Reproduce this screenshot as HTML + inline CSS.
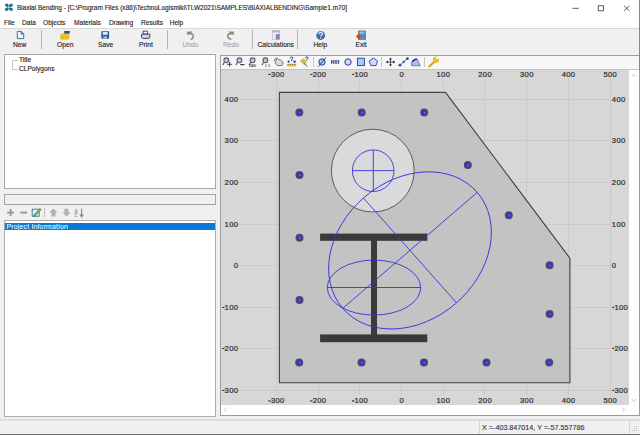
<!DOCTYPE html>
<html><head><meta charset="utf-8">
<style>
*{margin:0;padding:0;box-sizing:border-box}
html,body{width:640px;height:435px;overflow:hidden;background:#f0f0f0;font-family:"Liberation Sans",sans-serif;color:#1a1a1a}
.a{position:absolute;white-space:nowrap}
#title{left:0;top:0;width:640px;height:16px;background:#fff}
#menu{left:0;top:16px;width:640px;height:12px;background:#fff}
.t{font-size:6.6px;line-height:8px;-webkit-text-stroke:0.12px currentColor}
.lbl{font-size:6.7px;line-height:8px;color:#202020;-webkit-text-stroke:0.12px currentColor}
</style></head><body>
<div class="a" id="title"></div>
<div class="a" id="menu"></div>
<div class="a" style="left:0;top:28px;width:640px;height:1px;background:#d9d9d9"></div>
<!-- title text -->
<div class="a t" style="left:17px;top:4px;color:#222;font-size:6.53px">Biaxial Bending - [C:\Program Files (x86)\TechnoLogismiki\TLW2021\SAMPLES\BIAXIALBENDING\Sample1.m70]</div>
<!-- menu -->
<div class="a t" style="left:4px;top:18.5px">File</div>
<div class="a t" style="left:22px;top:18.5px">Data</div>
<div class="a t" style="left:43px;top:18.5px">Objects</div>
<div class="a t" style="left:74px;top:18.5px">Materials</div>
<div class="a t" style="left:109px;top:18.5px">Drawing</div>
<div class="a t" style="left:141px;top:18.5px">Results</div>
<div class="a t" style="left:169.7px;top:18.5px">Help</div>

<!-- left panels -->
<div class="a" style="left:4px;top:54px;width:212px;height:135px;background:#fff;border:1px solid #a8a8a8"></div>
<div class="a" style="left:4px;top:194px;width:212px;height:11px;background:#f0f0f0;border:1px solid #a4a4a4"></div>
<div class="a" style="left:4px;top:220px;width:212px;height:197px;background:#fff;border:1px solid #acacac"></div>
<div class="a" style="left:5px;top:223px;width:210px;height:7px;background:#0a78d6;overflow:hidden"><div class="a t" style="left:1.5px;top:-0.2px;color:#fff;font-size:6.9px;line-height:8px;letter-spacing:0.19px;-webkit-text-stroke:0.05px #fff">Project Information</div></div>

<div class="a t" style="left:19px;top:56px">Title</div>
<div class="a t" style="left:19px;top:65px">CLPolygons</div>

<!-- drawing panel -->
<div class="a" style="left:220px;top:55px;width:420px;height:361px;background:#fff;border:1px solid #9c9c9c"></div>
<svg class="a" style="left:0;top:0" width="640" height="435" viewBox="0 0 640 435">
<rect x="221" y="70" width="408" height="335" fill="#d7d7d7"/>
<g stroke="#cacaca" stroke-width="1"><line x1="276.5" y1="79" x2="276.5" y2="395"/><line x1="318.5" y1="79" x2="318.5" y2="395"/><line x1="359.5" y1="79" x2="359.5" y2="395"/><line x1="401.5" y1="79" x2="401.5" y2="395"/><line x1="443.5" y1="79" x2="443.5" y2="395"/><line x1="484.5" y1="79" x2="484.5" y2="395"/><line x1="526.5" y1="79" x2="526.5" y2="395"/><line x1="568.5" y1="79" x2="568.5" y2="395"/><line x1="610.5" y1="79" x2="610.5" y2="395"/><line x1="238" y1="390.5" x2="611" y2="390.5"/><line x1="238" y1="348.5" x2="611" y2="348.5"/><line x1="238" y1="307.5" x2="611" y2="307.5"/><line x1="238" y1="265.5" x2="611" y2="265.5"/><line x1="238" y1="224.5" x2="611" y2="224.5"/><line x1="238" y1="182.5" x2="611" y2="182.5"/><line x1="238" y1="140.5" x2="611" y2="140.5"/><line x1="238" y1="99.5" x2="611" y2="99.5"/></g>
<g font-family="Liberation Sans" font-size="7.6" fill="#2e2e2e" stroke="#2e2e2e" stroke-width="0.22" letter-spacing="0.35"><rect x="268.67" y="74.00" width="2" height="0.9"/><text x="270.92" y="76.90">300</text><rect x="268.67" y="400.50" width="2" height="0.9"/><text x="270.92" y="403.40">300</text><rect x="310.40" y="74.00" width="2" height="0.9"/><text x="312.65" y="76.90">200</text><rect x="310.40" y="400.50" width="2" height="0.9"/><text x="312.65" y="403.40">200</text><rect x="352.13" y="74.00" width="2" height="0.9"/><text x="354.38" y="76.90">100</text><rect x="352.13" y="400.50" width="2" height="0.9"/><text x="354.38" y="403.40">100</text><text x="399.39" y="76.90">0</text><text x="399.39" y="403.40">0</text><text x="436.54" y="76.90">100</text><text x="436.54" y="403.40">100</text><text x="478.27" y="76.90">200</text><text x="478.27" y="403.40">200</text><text x="520.00" y="76.90">300</text><text x="520.00" y="403.40">300</text><text x="561.73" y="76.90">400</text><text x="561.73" y="403.40">400</text><text x="603.46" y="76.90">500</text><text x="603.46" y="403.40">500</text><rect x="222.32" y="390.00" width="2" height="0.9"/><text x="224.57" y="392.90">300</text><rect x="612.20" y="390.00" width="2" height="0.9"/><text x="614.45" y="392.90">300</text><rect x="222.32" y="348.00" width="2" height="0.9"/><text x="224.57" y="350.90">200</text><rect x="612.20" y="348.00" width="2" height="0.9"/><text x="614.45" y="350.90">200</text><rect x="222.32" y="307.00" width="2" height="0.9"/><text x="224.57" y="309.90">100</text><rect x="612.20" y="307.00" width="2" height="0.9"/><text x="614.45" y="309.90">100</text><text x="233.72" y="267.90">0</text><text x="611.85" y="267.90">0</text><text x="224.57" y="226.90">100</text><text x="611.85" y="226.90">100</text><text x="224.57" y="184.90">200</text><text x="611.85" y="184.90">200</text><text x="224.57" y="142.90">300</text><text x="611.85" y="142.90">300</text><text x="224.57" y="101.90">400</text><text x="611.85" y="101.90">400</text></g>
<polygon points="279.4,92.4 445.5,92.4 569.9,258.2 569.9,382.7 279.4,382.7" fill="#c3c3c3" stroke="#454545" stroke-width="1.15"/>
<circle cx="372.8" cy="170.6" r="41.4" fill="#dadada" stroke="#505050" stroke-width="0.9"/>
<g fill="#3a3a3a"><rect x="320.1" y="233.6" width="107.2" height="7.2"/><rect x="371" y="240" width="6" height="95"/><rect x="320.1" y="334.4" width="107.2" height="7.8"/></g>
<g fill="none" stroke="#3535dd" stroke-width="0.9">
<circle cx="373.2" cy="170.7" r="20.8"/>
<line x1="352.4" y1="170.6" x2="394" y2="170.6"/><line x1="373.3" y1="150" x2="373.3" y2="191.4"/>
<ellipse cx="410" cy="250.4" rx="88.8" ry="70.1" transform="rotate(-40.7 410 250.4)"/>
<line x1="477.3" y1="192.3" x2="342.8" y2="308.3"/>
<line x1="363.5" y1="198.1" x2="456.6" y2="302.9"/>
<ellipse cx="374" cy="287.6" rx="46.7" ry="27.5"/>
<line x1="327.3" y1="287.5" x2="420.7" y2="287.5"/>
</g>
<g fill="#4c4c5c"><circle cx="299.3" cy="112.4" r="4.0"/><circle cx="361.7" cy="112.4" r="4.0"/><circle cx="424.2" cy="112.4" r="4.0"/><circle cx="299.5" cy="175" r="4.0"/><circle cx="467.8" cy="165.1" r="4.0"/><circle cx="508.8" cy="215.2" r="4.0"/><circle cx="299.5" cy="237.8" r="4.0"/><circle cx="549.6" cy="265.2" r="4.0"/><circle cx="299.5" cy="299.9" r="4.0"/><circle cx="549.6" cy="313.9" r="4.0"/><circle cx="299.2" cy="362.5" r="4.0"/><circle cx="361.5" cy="362.5" r="4.0"/><circle cx="424" cy="362.5" r="4.0"/><circle cx="486.5" cy="362.5" r="4.0"/><circle cx="549.2" cy="362.5" r="4.0"/></g>
<g fill="#3636c6"><circle cx="299.3" cy="112.4" r="2.7"/><circle cx="361.7" cy="112.4" r="2.7"/><circle cx="424.2" cy="112.4" r="2.7"/><circle cx="299.5" cy="175" r="2.7"/><circle cx="467.8" cy="165.1" r="2.7"/><circle cx="508.8" cy="215.2" r="2.7"/><circle cx="299.5" cy="237.8" r="2.7"/><circle cx="549.6" cy="265.2" r="2.7"/><circle cx="299.5" cy="299.9" r="2.7"/><circle cx="549.6" cy="313.9" r="2.7"/><circle cx="299.2" cy="362.5" r="2.7"/><circle cx="361.5" cy="362.5" r="2.7"/><circle cx="424" cy="362.5" r="2.7"/><circle cx="486.5" cy="362.5" r="2.7"/><circle cx="549.2" cy="362.5" r="2.7"/></g><g fill="#6a6ae8"><circle cx="299.7" cy="112.60000000000001" r="0.9"/><circle cx="362.09999999999997" cy="112.60000000000001" r="0.9"/><circle cx="424.59999999999997" cy="112.60000000000001" r="0.9"/><circle cx="299.9" cy="175.2" r="0.9"/><circle cx="468.2" cy="165.29999999999998" r="0.9"/><circle cx="509.2" cy="215.39999999999998" r="0.9"/><circle cx="299.9" cy="238.0" r="0.9"/><circle cx="550.0" cy="265.4" r="0.9"/><circle cx="299.9" cy="300.09999999999997" r="0.9"/><circle cx="550.0" cy="314.09999999999997" r="0.9"/><circle cx="299.59999999999997" cy="362.7" r="0.9"/><circle cx="361.9" cy="362.7" r="0.9"/><circle cx="424.4" cy="362.7" r="0.9"/><circle cx="486.9" cy="362.7" r="0.9"/><circle cx="549.6" cy="362.7" r="0.9"/></g>
</svg>
<!-- status bar -->
<div class="a" style="left:0;top:419px;width:640px;height:1px;background:#dadada"></div>
<div class="a t" style="left:482px;top:424px;color:#333;font-size:7.2px">X =-403.847014, Y =-57.557786</div>
<!-- extras -->
<svg class="a" style="left:0;top:0" width="640" height="435" viewBox="0 0 640 435">
<!-- tree lines -->
<g stroke="#c4c4c4" stroke-width="1"><line x1="12.5" y1="60.5" x2="12.5" y2="69.5"/><line x1="12.5" y1="60.5" x2="18" y2="60.5"/><line x1="12.5" y1="69.5" x2="18" y2="69.5"/></g>
<!-- drawing toolbar bottom line -->
<rect x="221" y="56" width="418" height="13" fill="#f7f7f7"/><line x1="221" y1="69.5" x2="639" y2="69.5" stroke="#c4c4c4"/>
<!-- vertical scrollbar -->
<rect x="629" y="70" width="10" height="335" fill="#ffffff"/>
<path d="M631.6,76.6 L633.8,74.4 L636,76.6" fill="none" stroke="#c0c0c0" stroke-width="0.9"/>
<path d="M631.6,399 L633.8,401.2 L636,399" fill="none" stroke="#c0c0c0" stroke-width="0.9"/>
<!-- horizontal scrollbar -->
<path d="M226.6,407.6 L224.4,409.8 L226.6,412" fill="none" stroke="#c0c0c0" stroke-width="0.9"/>
<path d="M622.4,407.6 L624.6,409.8 L622.4,412" fill="none" stroke="#c0c0c0" stroke-width="0.9"/>
<!-- status bar -->
<line x1="0" y1="420.5" x2="639" y2="420.5" stroke="#e2e2e2"/>
<line x1="479.5" y1="421" x2="479.5" y2="434" stroke="#d6d6d6"/>
<line x1="629.5" y1="421" x2="629.5" y2="434" stroke="#d6d6d6"/>
<g fill="#b8b8b8"><rect x="636" y="426" width="1" height="1"/><rect x="634" y="428" width="1" height="1"/><rect x="636" y="428" width="1" height="1"/><rect x="632" y="430" width="1" height="1"/><rect x="634" y="430" width="1" height="1"/><rect x="636" y="430" width="1" height="1"/></g>
<line x1="0" y1="434.5" x2="640" y2="434.5" stroke="#707070"/>
<!-- mini toolbar -->
<g fill="#9a9a9a"><rect x="7.2" y="211.6" width="6.8" height="2" /><rect x="9.6" y="209" width="2" height="7"/><rect x="20.3" y="211.6" width="6.8" height="2"/></g>
<rect x="32.2" y="209.2" width="7" height="7" fill="#e8f0fa" stroke="#3a6aaa" stroke-width="0.9"/>
<path d="M33.8,215 L39.8,208.4 L41.2,209.6 L35.2,216.2Z" fill="#5ac83a" stroke="#2a7a2a" stroke-width="0.5"/>
<path d="M33.6,215.2 L35.2,216.2 L33.2,216.6Z" fill="#333"/>
<line x1="44.5" y1="208" x2="44.5" y2="217" stroke="#c0c0c0"/>
<path d="M53.4,208.6 L57.6,212.6 H55.4 V216.4 H51.4 V212.6 H49.2Z" fill="#b0b0b0"/>
<path d="M66.6,216.6 L70.6,212.6 H68.4 V208.8 H64.4 V212.6 H62.4Z" fill="#b0b0b0"/>
<text x="74.6" y="212.6" font-family="Liberation Sans" font-size="4.6" fill="#8a8a8a" font-weight="bold">A</text>
<text x="74.6" y="217.2" font-family="Liberation Sans" font-size="4.6" fill="#8a8a8a" font-weight="bold">Z</text>
<path d="M81.6,208.6 V216.6 M79.8,214.4 L81.6,216.8 L83.4,214.4" fill="none" stroke="#8a8a8a" stroke-width="1.2"/>
</svg>
<!-- main toolbar -->
<div class="a lbl" style="left:13px;top:41px">New</div>
<div class="a lbl" style="left:57px;top:41px">Open</div>
<div class="a lbl" style="left:98px;top:41px">Save</div>
<div class="a lbl" style="left:139px;top:41px">Print</div>
<div class="a lbl" style="left:182.5px;top:41px;color:#a8a8a8">Undo</div>
<div class="a lbl" style="left:223px;top:41px;color:#a8a8a8">Redo</div>
<div class="a lbl" style="left:257.5px;top:41px">Calculations</div>
<div class="a lbl" style="left:313.5px;top:41px">Help</div>
<div class="a lbl" style="left:355.5px;top:41px">Exit</div>
<svg class="a" style="left:0;top:0" width="640" height="70" viewBox="0 0 640 70">
<g stroke="#b4b4b4" stroke-width="1"><line x1="41.5" y1="30" x2="41.5" y2="49"/><line x1="167.5" y1="30" x2="167.5" y2="49"/><line x1="252.5" y1="30" x2="252.5" y2="49"/><line x1="297.5" y1="30" x2="297.5" y2="49"/></g>
<!-- app icon -->
<g fill="#1f6f8f"><path d="M5.2,3.8 L8,3.8 L8.9,6.3 L7.9,7.3 L5.2,6.3Z"/><path d="M12.6,3.8 L9.8,3.8 L8.9,6.3 L9.9,7.3 L12.6,6.3Z"/><path d="M5.2,10.8 L8,10.8 L8.9,8.3 L7.9,7.3 L5.2,8.3Z"/><path d="M12.6,10.8 L9.8,10.8 L8.9,8.3 L9.9,7.3 L12.6,8.3Z"/></g>
<!-- window controls -->
<line x1="572.5" y1="8.3" x2="578.8" y2="8.3" stroke="#333" stroke-width="0.8"/>
<rect x="598.2" y="5.8" width="5.3" height="5" fill="none" stroke="#333" stroke-width="0.8"/>
<path d="M624.2,5.8 L629.4,10.8 M629.4,5.8 L624.2,10.8" stroke="#333" stroke-width="0.8"/>
<line x1="639.5" y1="0" x2="639.5" y2="435" stroke="#888" stroke-width="1"/>
<!-- New -->
<path d="M17.3,31.4 H21.3 L23.7,33.8 V38.6 H17.3Z" fill="#eaf4fc" stroke="#3f5f80" stroke-width="0.9"/>
<path d="M21.1,31.6 V34 H23.5" fill="#7a9ab8" stroke="#3f5f80" stroke-width="0.8"/>
<!-- Open -->
<path d="M60.6,33.4 H63.4 L64.2,32.6 H68.6 V39.3 H60.6Z" fill="#f0cc38"/>
<path d="M60.4,35.2 L61.8,34.4 H69.6 L68.8,39.4 H60.4Z" fill="#ecbc1e"/>
<path d="M64.2,31 H69.8 V33.6 H64.2Z" fill="#3a4c7c"/>
<!-- Save -->
<rect x="101.3" y="31.2" width="7.8" height="7.5" rx="0.6" fill="#2a5a9a"/>
<rect x="102.8" y="32" width="4.8" height="2.8" fill="#d8ecff"/>
<rect x="103.3" y="36.4" width="3.8" height="2.3" fill="#8fc0f0"/>
<!-- Print -->
<path d="M143,31.2 H147.6 V34 H143Z" fill="#f4f6fa" stroke="#404860" stroke-width="0.9"/>
<path d="M141.6,34.2 H149.8 V37.6 L148.6,38.4 H142.6 L141.6,37.6Z" fill="#c8cde0" stroke="#404860" stroke-width="1"/>
<path d="M143.5,37 L147,35.5" stroke="#f0f0ff" stroke-width="0.8"/>
<!-- Undo -->
<path d="M187.3,32.4 L190.8,32.4 L189.8,33.6 Q193.3,33.4 193.3,36 Q193.3,38.4 190.8,39.6" fill="none" stroke="#8a8a8a" stroke-width="1.6"/>
<path d="M187.2,32.2 L190.6,32.2 L187.2,35.6Z" fill="#8a8a8a"/>
<!-- Redo -->
<path d="M233.7,32.4 L230.2,32.4 L231.2,33.6 Q227.7,33.4 227.7,36 Q227.7,38.4 231.2,39.6" fill="none" stroke="#8a8a8a" stroke-width="1.6"/>
<path d="M233.8,32.2 L230.4,32.2 L233.8,35.6Z" fill="#8a8a8a"/>
<!-- Calculations -->
<rect x="272.4" y="30.8" width="7.4" height="8.8" fill="#f0ecf8" stroke="#a89cc8" stroke-width="0.5"/>
<rect x="272.4" y="30.8" width="7.4" height="1.6" fill="#b4a6d6"/>
<rect x="275.8" y="34.2" width="3.8" height="5.2" fill="#8a7cb4"/>
<!-- Help -->
<circle cx="320.7" cy="35.5" r="4.4" fill="#3f67a8"/>
<path d="M317.4,33.6 Q318.6,31.4 321.6,31.6" fill="none" stroke="#8ab0e0" stroke-width="0.8"/>
<path d="M319,34.2 Q319,32.6 320.8,32.6 Q322.6,32.6 322.6,34.1 Q322.6,35.2 320.8,35.8 V36.6" fill="none" stroke="#f0f6ff" stroke-width="1.1"/>
<circle cx="320.8" cy="38" r="0.7" fill="#f0f6ff"/>
<!-- Exit -->
<rect x="358.2" y="30.6" width="7.6" height="9.2" fill="#5e6e6a"/>
<rect x="359.4" y="31.6" width="5.2" height="7.6" fill="#4a94cc"/>
<path d="M359.4,31.6 H364.6 V33 L359.4,34.6Z" fill="#8ac0e8"/>
<path d="M356,36.4 L358.8,33.4 L361.8,36.4 L358.8,39.4Z" fill="#d8401e"/>
<!-- drawing toolbar -->
<g stroke="#c8c8c8"><line x1="313.5" y1="57" x2="313.5" y2="67"/><line x1="381.5" y1="57" x2="381.5" y2="67"/><line x1="424.5" y1="57" x2="424.5" y2="67"/></g>
<g fill="#c4c4dc" stroke="#5a5a6c" stroke-width="1.1">
<circle cx="226.3" cy="60.3" r="2.4"/><circle cx="239.4" cy="60.3" r="2.4"/><circle cx="252.6" cy="60.3" r="2.4"/><circle cx="265.4" cy="60.3" r="2.4"/>
</g>
<g stroke="#2c2c3c" stroke-width="1" fill="none">
<path d="M224.2,62.4 L223,65"/><path d="M237.3,62.4 L236.1,65"/><path d="M250.5,62.4 L249.3,65"/><path d="M263.3,62.4 L262.1,65"/>
<path d="M227.2,64.3 H232 M229.6,61.8 V66.6" stroke-width="0.9"/>
<path d="M240.2,64.6 H244.6" stroke-width="1.1"/>
</g>
<text x="248.4" y="67" font-family="Liberation Sans" font-size="4.4" font-weight="bold" fill="#303030">100</text>
<text x="264.8" y="67.2" font-family="Liberation Sans" font-size="4.2" fill="#303030">1:1</text>
<!-- hand -->
<path d="M275,61.6 L274.3,60.2 Q274.2,59 275.4,59.4 L276.6,60.4 L275.8,58.6 Q275.8,57.6 277,58 L278.6,59.6 L280.2,59.8 L282.6,61.8 Q283.4,63.8 282,65.4 L277.6,65.8 Q276,64.8 275,61.6Z" fill="#dcdce8" stroke="#6a6a78" stroke-width="0.9"/>
<!-- grid/ruler -->
<rect x="287" y="63.6" width="9.2" height="3" fill="#e6cc3a"/>
<g fill="#5a5020"><rect x="287.8" y="64.2" width="1" height="0.9"/><rect x="290" y="64.2" width="1" height="0.9"/><rect x="292.2" y="64.2" width="1" height="0.9"/><rect x="294.4" y="64.2" width="1" height="0.9"/></g>
<circle cx="288.6" cy="61.6" r="1.1" fill="#2a3f8a"/><circle cx="294.6" cy="61.6" r="1.2" fill="#2a3f8a"/>
<path d="M290.4,58.4 Q290.4,57 291.6,57 Q292.8,57 292.8,58.2 Q292.8,59 291.6,59.6 V61" fill="none" stroke="#2a3f8a" stroke-width="1"/>
<!-- pin -->
<path d="M300.6,61 L303.4,58.8 L306.4,62 L304.2,64.6 Z" fill="#e4c030" stroke="#8a7a30" stroke-width="0.5"/>
<path d="M304.6,63.6 L307.2,66.4" stroke="#505050" stroke-width="1"/>
<path d="M305.6,58.2 Q305.6,56.8 306.8,56.8 Q308,56.8 308,58 Q308,58.8 306.8,59.4 V60.4" fill="none" stroke="#2a3f8a" stroke-width="1"/>
<!-- phi -->
<circle cx="322" cy="62" r="3.2" fill="#a8c8f0" stroke="#2a3a9a" stroke-width="1"/>
<path d="M318.2,66.6 L326,57.4" stroke="#2a3a9a" stroke-width="1"/>
<!-- IPE -->
<g fill="#4a5690"><rect x="331" y="60" width="1.3" height="3.8"/><rect x="333.2" y="60" width="1.3" height="3.8"/><rect x="332" y="61.4" width="1.6" height="1"/><rect x="335.2" y="60" width="1.4" height="3.8"/><rect x="336.4" y="60" width="1" height="0.9"/><rect x="336.4" y="61.5" width="0.8" height="0.8"/><rect x="336.4" y="62.9" width="1" height="0.9"/><path d="M337.8,60 H338.6 Q339.4,60 339.4,61.9 Q339.4,63.8 338.6,63.8 H337.8Z"/></g>
<!-- circle -->
<circle cx="348" cy="62" r="3.2" fill="#c8dcf8" stroke="#2a3a9a" stroke-width="1"/>
<!-- square -->
<rect x="357.4" y="58.2" width="7" height="7.4" fill="#a8cbf5" stroke="#2a3a9a" stroke-width="0.9"/>
<!-- pentagon -->
<path d="M373.4,58 L377.6,61 L376,65.6 L370.8,65.6 L369.2,61Z" fill="#c8dcf8" stroke="#2a3a9a" stroke-width="0.9"/>
<!-- move -->
<g stroke="#303050" stroke-width="0.8" fill="#303050"><path d="M390.5,58 V66 M386.4,62 H394.6"/><path d="M388.9,59.6 L390.5,57.4 L392.1,59.6Z M388.9,64.4 L390.5,66.6 L392.1,64.4Z M388,60.4 L385.8,62 L388,63.6Z M393,60.4 L395.2,62 L393,63.6Z" stroke="none"/></g>
<!-- measure -->
<path d="M400,65.2 L407.4,58.6" stroke="#3a4a9a" stroke-width="0.9"/>
<circle cx="400" cy="65.2" r="1.4" fill="#3a4a9a"/><circle cx="403.7" cy="61.9" r="1.1" fill="#3a4a9a"/><circle cx="407.4" cy="58.6" r="1.4" fill="#3a4a9a"/>
<!-- angle -->
<path d="M411.6,65.8 L420.2,65.8 L417,58.8 Q413.2,58.8 411.6,62.4Z" fill="#a4c0ec" stroke="#4a5aa0" stroke-width="0.7"/>
<path d="M412.4,62 Q413.6,59.4 416.8,59.2" fill="none" stroke="#1a2a6a" stroke-width="1.3"/>
<!-- wrench -->
<path d="M429.4,66.4 L434.4,61.4" stroke="#d4a410" stroke-width="2.1" stroke-linecap="round"/>
<path d="M433.2,60.6 A3,3 0 1 0 438.6,58.2 L436.8,59.6 L435.6,58.4 L437,56.6 A3,3 0 0 0 433.2,60.6Z" fill="#e8bc22"/>
</svg>
</body></html>
